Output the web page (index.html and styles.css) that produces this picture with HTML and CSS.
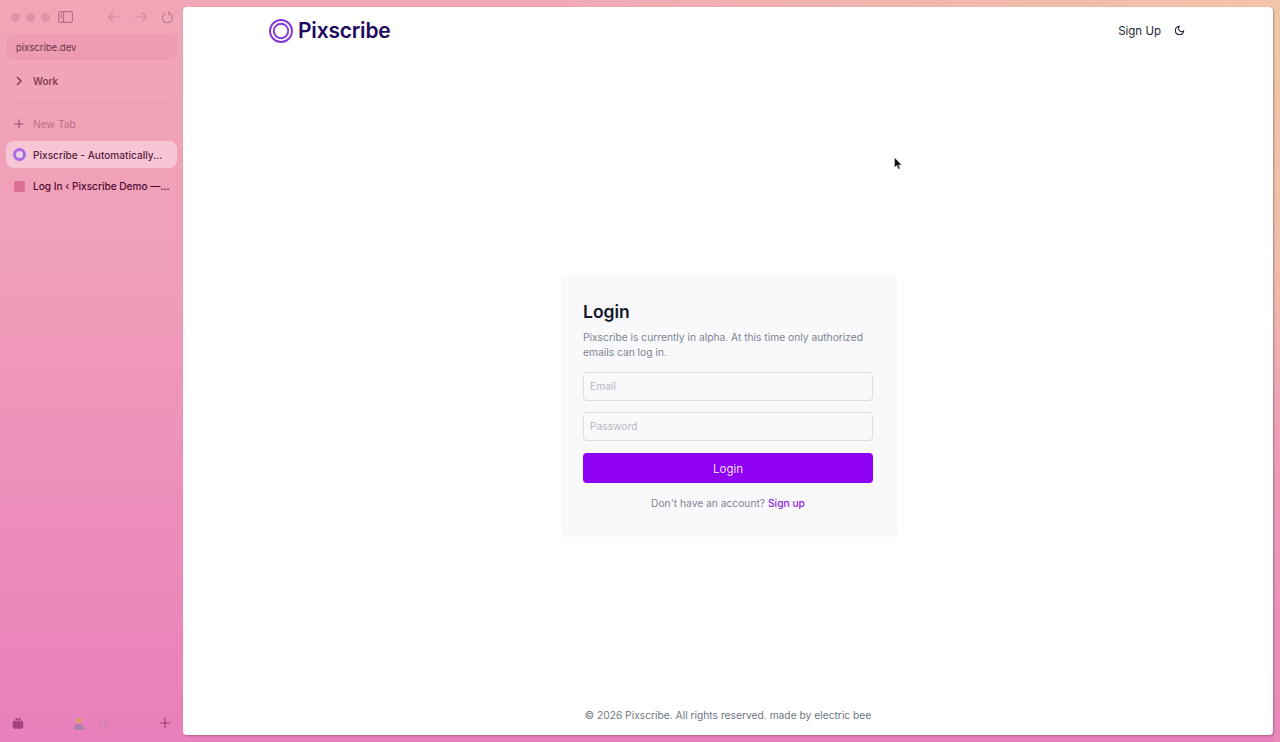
FILE: index.html
```html
<!DOCTYPE html>
<html lang="en">
<head>
<meta charset="utf-8">
<title>Pixscribe</title>
<link rel="stylesheet" href="styles.css">
</head>
<body>
<div class="desktop">
  <aside class="sidebar">
    <div class="toolbar">
      <div class="lights"><i></i><i></i><i></i></div>
      <svg class="tb-panel" width="15" height="12" viewBox="0 0 15 12"><rect x="0.6" y="0.6" width="13.8" height="10.8" rx="1.5"/><path d="M5.5 1v10M2 3h2M2 5h2M2 7h2"/></svg>
      <div class="nav">
        <svg width="14" height="12" viewBox="0 0 14 12"><path d="M13 6H1.5M6 1.5 1.5 6 6 10.5"/></svg>
        <svg width="14" height="12" viewBox="0 0 14 12"><path d="M1 6h11.5M8 1.5 12.5 6 8 10.5"/></svg>
        <svg width="13" height="13" viewBox="0 0 13 13"><path d="M8.5 2.2a5 5 0 1 1-4.2 0M7 0.5 8.8 2.3 7 4"/></svg>
      </div>
    </div>
    <div class="url">pixscribe.dev</div>
    <div class="row folder">
      <svg class="ic" width="12" height="12" viewBox="0 0 12 12"><path class="thick" d="M4 2l4 4-4 4"/></svg>
      <span>Work</span>
    </div>
    <hr class="sep">
    <div class="row newtab">
      <svg class="ic" width="12" height="12" viewBox="0 0 12 12"><path d="M6 1.5v9M1.5 6h9"/></svg>
      <span>New Tab</span>
    </div>
    <div class="row tab active">
      <span class="fav-ring"></span>
      <span>Pixscribe - Automatically...</span>
    </div>
    <div class="row tab second">
      <span class="fav-square"></span>
      <span>Log In ‹ Pixscribe Demo —...</span>
    </div>
    <div class="side-foot">
      <svg class="archive" width="12" height="12" viewBox="0 0 12 12"><path d="M1 4.2h10V10a1.4 1.4 0 0 1-1.4 1.4H2.400A1.400 1.400 0 0 1 1 10z"/><path d="M3.500 3.200 4 .8l2 1.700L8 .8l.5 2.400z"/></svg>
      <div class="spaces">
        <svg width="12" height="13" viewBox="0 0 12 13"><circle cx="6" cy="3.300" r="2.600" fill="#d9a15c"/><path d="M1 12.500c0-4.500 2-5.500 5-5.500s5 1 5 5.500z" fill="#a77fae"/></svg>
        <svg class="ghost" width="11" height="11" viewBox="0 0 11 11"><path d="M2 1.500h4.500l3 3v3l-3 2.500H2z"/></svg>
      </div>
      <svg class="ic" width="12" height="12" viewBox="0 0 12 12"><path d="M6 .5v11M.5 6h11"/></svg>
    </div>
  </aside>

  <main class="page">
    <header class="site-head">
      <div class="brand">
        <svg width="24" height="24" viewBox="0 0 24 24"><circle cx="12" cy="12" r="11" /><circle cx="12" cy="12" r="7.200"/></svg>
        <span>Pixscribe</span>
      </div>
      <div class="head-actions">
        <span>Sign Up</span>
        <svg width="11" height="11" viewBox="0 0 24 24"><path d="M21 12.800A9 9 0 1 1 11.200 3a7 7 0 0 0 9.800 9.800z"/></svg>
      </div>
    </header>
    <section class="content">
      <form class="card">
        <h1>Login</h1>
        <p>Pixscribe is currently in alpha. At this time only authorized emails can log in.</p>
        <div class="field">Email</div>
        <div class="field">Password</div>
        <div class="btn">Login</div>
        <div class="alt">Don't have an account? <a>Sign up</a></div>
      </form>
    </section>
    <footer class="site-foot">© 2026 Pixscribe. All rights reserved. made by electric bee</footer>
    <svg class="cursor" width="9" height="14" viewBox="0 0 9 14"><path d="M0.500 0.500v10l2.400-2.100 1.500 3.800 1.700-.7-1.500-3.600h3.200z"/></svg>
  </main>
</div>
</body>
</html>
```
FILE: styles.css
```css
* { box-sizing: border-box; }
html, body { margin: 0; height: 100%; overflow: hidden; }
body { font-family: Inter, "Liberation Sans", sans-serif; }

.desktop {
  width: 1280px;
  height: 742px;
  display: flex;
  padding: 7px 7px 7px 0;
  background:
    linear-gradient(180deg, #f1c8a7 0%, #efb9ab 40%, #ee9eb6 58%, #ea88ba 100%) right / 7px 100% no-repeat,
    linear-gradient(90deg, #f1a6b6 0%, #f0a8b4 40%, #f2c4a8 100%) top / 100% 7px no-repeat,
    linear-gradient(180deg, #f1a6b6 0%, #f09fb9 35%, #ec8dbb 70%, #e880bb 100%);
}

.sidebar {
  width: 183px;
  display: flex;
  flex-direction: column;
  color: #5c0f3b;
  font-size: 10px;
  padding: 0 6px;
}
.sidebar svg { fill: none; stroke: currentColor; stroke-width: 1.100; }

.toolbar {
  height: 20px;
  display: flex;
  align-items: center;
  margin-left: 5px;
  color: #b56f88;
}
.lights { display: flex; gap: 6px; }
.lights i { width: 9px; height: 9px; border-radius: 50%; background: #dd94a9; }
.tb-panel { margin-left: 8px; }
.nav { margin-left: auto; margin-right: 3px; display: flex; gap: 13px; align-items: center; color: #cf8aa1; }
.nav svg:last-child { color: #b87a90; }

.url {
  height: 26px;
  margin-top: 7px;
  padding: 0 10px;
  display: flex;
  align-items: center;
  background: #ed9cb1;
  border-radius: 8px;
  color: #6e3350;
  font-size: 9.500px;
}

.row {
  height: 28px;
  display: flex;
  align-items: center;
  gap: 8px;
  padding: 0 7px;
  border-radius: 8px;
  white-space: nowrap;
}
.ic { flex: none; width: 12px; }
.thick { stroke-width: 1.600; }
.folder { margin-top: 7px; color: #8b3f5d; font-weight: 600; font-size: 9.800px; gap: 8px; }
.sep { width: 153px; margin: 7px 0 0 9px; border: 0; border-top: 1px solid #ea96ac; }
.newtab { margin-top: 7px; color: #bb7089; font-size: 10.300px; }
.newtab svg { color: #8f4a66; }
.tab { color: #4f0b33; font-size: 10.100px; font-weight: 500; }
.active { margin-top: 3px; height: 27px; background: #f6c6d4; color: #5a1c40; }
.second { margin-top: 4px; }
.fav-ring { flex: none; width: 13px; height: 13px; margin: 0 -.5px; border-radius: 50%; border: 3px solid #aa6be0; background: #efd3e8; }
.fav-square { flex: none; width: 11px; height: 11px; margin: 0 .5px; border-radius: 2px; background: #da7096; }

.side-foot {
  margin-top: auto;
  height: 22px;
  margin-bottom: 1px;
  display: flex;
  align-items: center;
  padding: 0 6px;
  color: #9b3f74;
}
.spaces { display: flex; align-items: center; gap: 13px; margin-left: 49px; margin-right: auto; }
.sidebar .spaces svg:first-child { stroke: none; }
.ghost { color: #d27fae; }
.archive { fill: #a5457f !important; stroke-width: .4 !important; }

.page {
  position: relative;
  flex: 1;
  display: flex;
  flex-direction: column;
  background: #fff;
  border-radius: 4px;
  color: #111827;
  box-shadow: 1px 1px 2px rgba(90,50,70,.4);
}

.site-head {
  height: 47px;
  padding: 0 88px 0 86px;
  display: flex;
  align-items: center;
  justify-content: space-between;
}
.brand { display: flex; align-items: center; gap: 5px; font-size: 21px; font-weight: 600; letter-spacing: -.2px; color: #1d0a5c; }
.brand svg { fill: none; stroke: #8238d8; stroke-width: 1.900; }
.head-actions { display: flex; align-items: center; gap: 13px; font-size: 11.500px; color: #1f2937; }
.head-actions svg { fill: none; stroke: #1f2937; stroke-width: 2.200; }

.content { flex: 1; padding-top: 221px; display: flex; justify-content: center; margin-left: 2px; }
.card {
  width: 336px;
  height: 262px;
  padding: 27px 24px 0 22px;
  background: #f9f9fc;
  border-radius: 2px;
}
h1 { margin: 0; font-size: 17.500px; line-height: 20px; font-weight: 600; color: #111827; }
p { margin: 8px 0 0; font-size: 10.250px; line-height: 15px; color: #7b8492; }
.field {
  height: 29px;
  margin-top: 11px;
  padding: 0 6px 1px;
  display: flex;
  align-items: center;
  border: 1px solid #dadee5;
  border-radius: 4px;
  background: #f9f9fc;
  font-size: 10.250px;
  color: #b3b8c1;
}
p + .field { margin-top: 12px; }
.btn {
  height: 30px;
  margin-top: 12px;
  padding-top: 1px;
  display: flex;
  align-items: center;
  justify-content: center;
  border-radius: 4px;
  background: #8f00f5;
  color: #f3dcff;
  font-size: 11.500px;
}
.alt { margin-top: 13px; text-align: center; font-size: 10.250px; line-height: 14px; color: #7b8492; }
.alt a { color: #9022d6; font-weight: 500; }

.site-foot { height: 40px; text-align: center; font-size: 10.250px; color: #6f7682; padding-top: 14px; }
.cursor { position: absolute; left: 711px; top: 150px; fill: #111; stroke: #fff; stroke-width: .4; }
```
